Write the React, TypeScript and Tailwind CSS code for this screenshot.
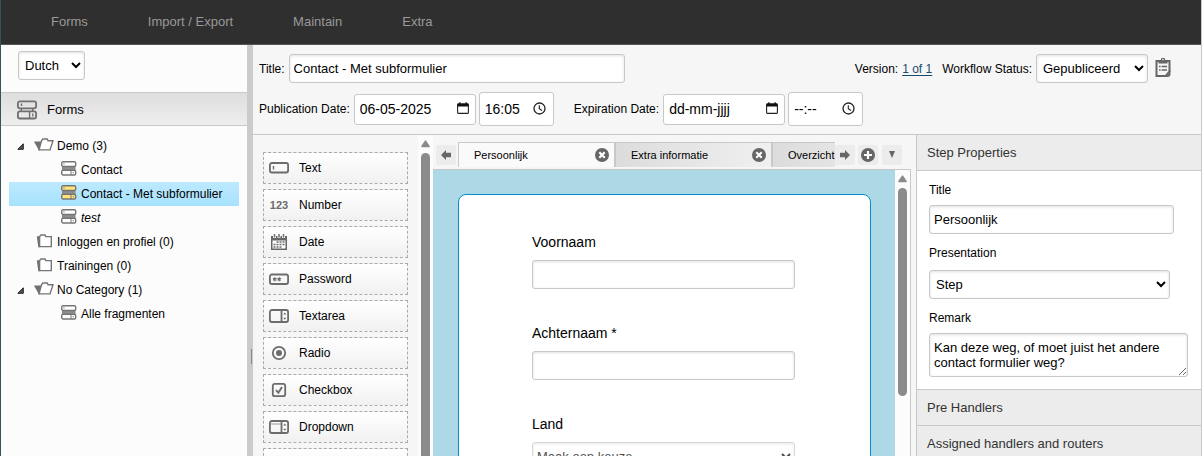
import type { ReactNode } from "react";

const fieldClass =
  "h-[29px] rounded-[3px] border border-[#c8c8c8] bg-white text-[13px] text-black shadow-[inset_0_1px_3px_rgba(0,0,0,0.12)]";

/* Icons */

const FormIcon = ({ active = false }: { active?: boolean }) => (
  <svg width="16" height="15" viewBox="0 0 16 15" fill={active ? "#ffe47a" : "#fff"} stroke="#757575">
    <rect x="1" y="4" width="13.5" height="7" fill="#8e8e8e" stroke="none" />
    <rect x="0.7" y="0.8" width="14" height="4.7" rx="1.5" strokeWidth="1.4" />
    <rect x="0.7" y="9.3" width="14" height="4.7" rx="1.5" strokeWidth="1.4" />
    <path d="M10 9v5" />
    <path d="M3 2.3v1.2M12.3 11v1.2" strokeWidth="1" />
  </svg>
);

const FormsIcon = () => (
  <svg width="20" height="20" viewBox="0 0 20 20" fill="none" stroke="#707070" strokeWidth="1.8">
    <rect x="0.9" y="1.3" width="18.2" height="7" rx="2" />
    <rect x="0.9" y="11.3" width="18.2" height="7.2" rx="2" />
    <path d="M4.3 8.5v2.5M15.7 8.5v2.5M12.6 11.3v7" strokeWidth="1.4" />
    <path d="M4.5 3.5v2.5M15.8 13.5v3" strokeWidth="1.4" />
  </svg>
);

const OpenFolderIcon = () => (
  <svg width="20" height="14" viewBox="0 0 20 14">
    <path d="M0 3.5h7l-1.5 9H5z" fill="#6f6f6f" />
    <path d="M5 11.9 7.5 2.8 8.8 1h4.4l.8 1.8h5l-3 9.1z" fill="#fff" stroke="#757575" strokeWidth="1.4" />
  </svg>
);

const FolderIcon = () => (
  <svg width="20" height="14" viewBox="0 0 20 14">
    <path d="M2.8 2.2H6v11H4.3z" fill="#6f6f6f" />
    <path d="M5.6 12.6V2.6L7 1h4l.8 1.6h5.5v10z" fill="#fff" stroke="#757575" strokeWidth="1.4" />
  </svg>
);

const ClipboardIcon = () => (
  <svg width="16" height="20" viewBox="0 0 16 20">
    <path d="M1.5 4h13v10.5L10.8 19H1.5z" fill="#f5f5f5" stroke="#666" strokeWidth="2" />
    <path d="M15.5 12.5V17a3 3 0 0 1-3 3H8.5c3.500 0 6-3 7-7.500z" fill="#666" />
    <path d="M3.500 3H5.700a2.300 2.300 0 1 1 4.600 0h2.200v3.500h-9z" fill="#666" />
    <circle cx="8" cy="2.600" r="0.800" fill="#f5f5f5" />
    <path d="M4 9.500h1.600M4 13h1.600M6.600 9.500H12M6.600 13H12" stroke="#666" strokeWidth="1.400" />
  </svg>
);

const CalendarIcon = () => (
  <svg className="pointer-events-none absolute right-[7px] top-[8px]" width="12" height="13" viewBox="0 0 12 13">
    <rect x="0.6" y="2" width="10.8" height="9.4" rx="0.8" fill="none" stroke="#222" strokeWidth="1.1" />
    <path d="M.6 1.6h10.8v2.9H.6zM2.2.3h1.3v1.6H2.2zM8.500.3h1.3v1.6H8.500z" fill="#111" />
  </svg>
);

const ClockIcon = () => (
  <svg
    className="pointer-events-none absolute right-[8px] top-[10px]"
    width="13"
    height="13"
    viewBox="0 0 13 13"
    fill="none"
    stroke="#222"
  >
    <circle cx="6.5" cy="6.5" r="5.5" strokeWidth="1.3" />
    <path d="M6.3 3.2v3.6l2.7 1.7" strokeWidth="1.1" />
  </svg>
);

const CloseIcon = () => (
  <svg width="14" height="14" viewBox="0 0 14 14">
    <circle cx="7" cy="7" r="7" fill="#666" />
    <path d="m4.3 4.3 5.4 5.4M9.7 4.3 4.3 9.7" stroke="#fff" strokeWidth="2.2" />
  </svg>
);

const PlusIcon = () => (
  <svg width="14" height="14" viewBox="0 0 14 14">
    <circle cx="7" cy="7" r="7" fill="#666" />
    <path d="M7 3v8M3 7h8" stroke="#fff" strokeWidth="2.2" />
  </svg>
);

const LeftIcon = () => (
  <svg width="10" height="10" viewBox="0 0 10 10">
    <path d="M0 5 5 0v2.7h5v4.6H5V10z" fill="#666" />
  </svg>
);

const RightIcon = () => (
  <svg width="10" height="10" viewBox="0 0 10 10">
    <path d="M10 5 5 0v2.7H0v4.6h5V10z" fill="#666" />
  </svg>
);

const ToolSvg = ({ children }: { children: ReactNode }) => (
  <svg width="20" height="16" viewBox="0 0 20 16" fill="none" stroke="#6c6c6c" strokeWidth="1.8">
    {children}
  </svg>
);

const fieldTools: { label: string; icon: ReactNode }[] = [
  {
    label: "Text",
    icon: (
      <ToolSvg>
        <rect x="0.9" y="3" width="18.2" height="9.5" rx="2" />
        <path d="M4.5 6v3.5" strokeWidth="1.4" />
      </ToolSvg>
    ),
  },
  {
    label: "Number",
    icon: <span className="w-5 text-center text-[11px] font-bold text-[#6c6c6c]">123</span>,
  },
  {
    label: "Date",
    icon: (
      <ToolSvg>
        <path d="M2 2h16v14H2z" fill="#666" stroke="none" />
        <path d="M3.5 6.5h13v8h-13z" fill="#fff" stroke="none" />
        <path d="M5.5 0v4M10 0v4M14.5 0v4" stroke="#fff" strokeWidth="3" />
        <path d="M5.5 0v3.5M10 0v3.5M14.5 0v3.5" strokeWidth="1.5" />
        <path d="M7.5 8h8M4.5 10.5h11M4.5 13h8" strokeDasharray="2 1" strokeWidth="1.6" />
      </ToolSvg>
    ),
  },
  {
    label: "Password",
    icon: (
      <ToolSvg>
        <rect x="0.9" y="3.5" width="18.2" height="9.5" rx="2" />
        <path d="M5.8 6.2v4M4 7.2l3.6 2M7.6 7.2l-3.6 2M10.3 6.2v4M8.5 7.2l3.6 2M12.1 7.2l-3.6 2" strokeWidth="1.2" />
      </ToolSvg>
    ),
  },
  {
    label: "Textarea",
    icon: (
      <ToolSvg>
        <rect x="0.9" y="2" width="18.2" height="12" rx="2" />
        <path d="M12.5 2v12" />
        <path d="m14.2 6.5 1.6-2 1.6 2zM14.2 9.7l1.6 2 1.6-2z" fill="#6c6c6c" stroke="none" />
      </ToolSvg>
    ),
  },
  {
    label: "Radio",
    icon: (
      <ToolSvg>
        <circle cx="10" cy="8" r="6.2" />
        <circle cx="10" cy="8" r="3" fill="#6c6c6c" stroke="none" />
      </ToolSvg>
    ),
  },
  {
    label: "Checkbox",
    icon: (
      <ToolSvg>
        <rect x="3.8" y="1.8" width="12.4" height="12.4" rx="2" />
        <path d="m7 8.2 2.4 2.6L13 5" strokeWidth="1.9" />
      </ToolSvg>
    ),
  },
  {
    label: "Dropdown",
    icon: (
      <ToolSvg>
        <rect x="0.9" y="2" width="18.2" height="12" rx="2" />
        <path d="M12.5 2v12" />
        <path d="M1 5h11" strokeWidth="1" stroke="#999" />
        <path d="m14.2 6.5 1.6-2 1.6 2zM14.2 9.7l1.6 2 1.6-2z" fill="#6c6c6c" stroke="none" />
      </ToolSvg>
    ),
  },
  { label: "", icon: null },
];

const tree = [
  { label: "Demo (3)", type: "open" },
  { label: "Contact", type: "form" },
  { label: "Contact - Met subformulier", type: "form", active: true },
  { label: "test", type: "form", italic: true },
  { label: "Inloggen en profiel (0)", type: "closed" },
  { label: "Trainingen (0)", type: "closed" },
  { label: "No Category (1)", type: "open" },
  { label: "Alle fragmenten", type: "form" },
];

const TopBar = () => (
  <nav className="flex h-[45px] shrink-0 items-center border-b border-[#555] bg-[#2f2f2f] pl-5 text-[13px] text-[#999]">
    <a href="#forms" className="px-[30px]">Forms</a>
    <a href="#import" className="px-[30px]">Import / Export</a>
    <a href="#maintain" className="px-[30px]">Maintain</a>
    <a href="#extra" className="px-[30px]">Extra</a>
  </nav>
);

const Sidebar = () => (
  <aside className="w-[246px] shrink-0 bg-[#fcfcfc]">
    <div className="px-[17px] pb-3 pt-[6px]">
      <select aria-label="Language" className={`${fieldClass} block w-[67px] px-[2px]`}>
        <option>Dutch</option>
      </select>
    </div>
    <div className="flex h-[34px] items-center gap-[10px] border-y border-[#c8c8c8] bg-linear-to-b from-[#dedede] to-[#eee] px-4 pt-[2px] text-[13px]">
      <FormsIcon />
      Forms
    </div>
    <ul className="px-2 pt-2 text-xs">
      {tree.map((node) =>
        node.type === "form" ? (
          <li
            key={node.label}
            className={`flex h-6 items-center gap-1 pl-[52px] ${
              node.active ? "bg-linear-to-b from-[#bdeaff] to-[#a6e1fd]" : ""
            } ${node.italic ? "italic" : ""}`}
          >
            <span className="pb-1">
              <FormIcon active={node.active} />
            </span>
            {node.label}
          </li>
        ) : (
          <li key={node.label} className="flex h-6 items-center gap-[3px] pl-2">
            <span className="w-[14px]">
              {node.type === "open" && (
                <svg width="7" height="7" viewBox="0 0 7 7">
                  <path d="M6.3.8v5.5H.8z" fill="#555" stroke="#222" />
                </svg>
              )}
            </span>
            <span className="pb-[3px]">{node.type === "open" ? <OpenFolderIcon /> : <FolderIcon />}</span>
            {node.label}
          </li>
        ),
      )}
    </ul>
  </aside>
);

const DateTimeInputs = ({ id, date, time }: { id: string; date: string; time: string }) => (
  <div className="flex items-center gap-[3px]">
    <div className="relative">
      <input
        id={id}
        defaultValue={date}
        className="block h-[31px] w-[122px] rounded-[3px] border border-[#c8c8c8] bg-white px-[5px] text-sm text-black"
      />
      <CalendarIcon />
    </div>
    <div className="relative">
      <input
        aria-label="Time"
        defaultValue={time}
        className="block h-[34px] w-[75px] rounded-[3px] border border-[#c8c8c8] bg-white px-[5px] text-sm text-black"
      />
      <ClockIcon />
    </div>
  </div>
);

const FormHeader = () => (
  <header className="border-b border-[#c8c8c8] bg-[#f6f6f6] pb-2 pl-[6px] pr-[30px] pt-[9px] text-xs">
    <div className="flex items-center">
      <label htmlFor="title" className="mr-1">Title:</label>
      <input id="title" defaultValue="Contact - Met subformulier" className={`${fieldClass} w-[336px] px-1`} />
      <div className="ml-auto flex items-center">
        <span>Version:</span>
        <a href="#version" className="ml-1 mr-[10px] text-[#1a4a6e] underline underline-offset-2">1 of 1</a>
        <label htmlFor="status" className="mr-1">Workflow Status:</label>
        <select id="status" className={`${fieldClass} w-[112px] px-[2px]`}>
          <option>Gepubliceerd</option>
        </select>
        <button type="button" aria-label="Report" className="ml-[7px] pb-[3px]">
          <ClipboardIcon />
        </button>
      </div>
    </div>
    <div className="mt-[9px] flex items-center">
      <label htmlFor="publication" className="mr-1">Publication Date:</label>
      <DateTimeInputs id="publication" date="06-05-2025" time="16:05" />
      <label htmlFor="expiration" className="ml-5 mr-1">Expiration Date:</label>
      <DateTimeInputs id="expiration" date="dd-mm-jjjj" time="--:--" />
    </div>
  </header>
);

const ScrollBar = ({ thumb }: { thumb: string }) => (
  <div className="flex w-[15px] shrink-0 flex-col items-center gap-[5px] bg-[#fcfcfc] pt-[5px]">
    <svg className="shrink-0" width="9" height="8" viewBox="0 0 9 8">
      <path d="M4.5 1.2 8 6.5H1z" fill="#8b8b8b" stroke="#8b8b8b" strokeWidth="1.6" strokeLinejoin="round" />
    </svg>
    <div className={`w-[9px] shrink-0 rounded-full bg-[#8b8b8b] ${thumb}`} />
  </div>
);

const Toolbox = () => (
  <div className="flex w-[180px] shrink-0 overflow-hidden bg-[#f6f6f6]">
    <div className="flex flex-1 flex-col gap-[5px] px-[10px] pt-[17px]">
      {fieldTools.map((tool) => (
        <button
          key={tool.label}
          type="button"
          className="flex h-8 shrink-0 items-center gap-[10px] border border-dashed border-[#aaa] bg-linear-to-b from-white to-[#f1f1f1] px-[5px] text-xs"
        >
          {tool.icon}
          {tool.label}
        </button>
      ))}
    </div>
    <ScrollBar thumb="h-[500px]" />
  </div>
);

const Tab = ({ label, active = false }: { label: string; active?: boolean }) => (
  <div
    className={`flex shrink-0 items-center justify-between border-t border-[#c8c8c8] pl-[15px] pr-[5px] text-[11px] ${
      active ? "w-[156px] border-l bg-[#fafafa]" : "w-[157px] border-l-2 bg-linear-to-r from-[#dcdcdc] to-[#f0f0f0]"
    }`}
  >
    {label}
    <button type="button" aria-label={`Close ${label}`}>
      <CloseIcon />
    </button>
  </div>
);

const tabButton = "flex size-5 shrink-0 items-center justify-center rounded-xs bg-[#ececec]";

const Canvas = () => (
  <div className="flex min-w-0 flex-1 flex-col bg-[#f6f6f6] pr-[5px]">
    <div className="flex items-center pl-[3px] pr-[9px] pt-[7px]">
      <button type="button" aria-label="Previous" className={tabButton}>
        <LeftIcon />
      </button>
      <div className="ml-[2px] flex h-[25px] flex-1 overflow-hidden">
        <Tab label="Persoonlijk" active />
        <Tab label="Extra informatie" />
        <Tab label="Overzicht" />
      </div>
      <div className="flex gap-[3px]">
        <button type="button" aria-label="Next" className={tabButton}>
          <RightIcon />
        </button>
        <button type="button" aria-label="Add step" className={tabButton}>
          <PlusIcon />
        </button>
        <button type="button" aria-label="All steps" className={`${tabButton} ml-px`}>
          <svg width="6" height="7" viewBox="0 0 6 7">
            <path d="M0 0h6L3 7z" fill="#666" />
          </svg>
        </button>
      </div>
    </div>
    <div className="mt-[2px] flex min-h-0 flex-1 overflow-hidden border-r border-t border-[#c8c8c8]">
      <div className="flex-1 bg-[#add8e6] pl-[25px] pr-6 pt-6">
        <form className="flex h-[600px] flex-col gap-[34px] rounded-lg border border-[#0090d0] bg-white pl-[73px] pr-[75px] pt-[37px] text-sm">
          <div>
            <label htmlFor="voornaam" className="block pb-2">Voornaam</label>
            <input id="voornaam" className={`${fieldClass} block w-full px-1`} />
          </div>
          <div>
            <label htmlFor="achternaam" className="block pb-2">Achternaam *</label>
            <input id="achternaam" className={`${fieldClass} block w-full px-1`} />
          </div>
          <div>
            <label htmlFor="land" className="block pb-2">Land</label>
            <select id="land" disabled className={`${fieldClass} block w-full opacity-70`}>
              <option>Maak een keuze</option>
            </select>
          </div>
        </form>
      </div>
      <ScrollBar thumb="h-[208px]" />
    </div>
  </div>
);

const PanelTitle = ({ children }: { children: ReactNode }) => (
  <h2 className="flex h-9 items-center border-b border-[#c8c8c8] bg-[#ececec] px-[10px] text-[13px] text-[#333]">
    {children}
  </h2>
);

const Properties = () => (
  <section className="w-[285px] shrink-0 border-l border-[#c8c8c8] bg-white">
    <PanelTitle>Step Properties</PanelTitle>
    <div className="border-b border-[#c8c8c8] px-3 pb-3 pt-[11px] text-xs">
      <label htmlFor="stepTitle" className="block pb-[7px]">Title</label>
      <input id="stepTitle" defaultValue="Persoonlijk" className={`${fieldClass} block w-[245px] px-1`} />
      <label htmlFor="presentation" className="block pb-[9px] pt-[11px]">Presentation</label>
      <select id="presentation" className={`${fieldClass} block w-[241px] px-[2px]`}>
        <option>Step</option>
      </select>
      <label htmlFor="remark" className="block pb-[7px] pt-[11px]">Remark</label>
      <textarea
        id="remark"
        defaultValue="Kan deze weg, of moet juist het andere contact formulier weg?"
        className="block h-11 w-[259px] rounded-[3px] border border-[#c8c8c8] px-1 pt-[6px] text-[13px] leading-[15px] text-black shadow-[inset_0_1px_3px_rgba(0,0,0,0.12)]"
      />
    </div>
    <PanelTitle>Pre Handlers</PanelTitle>
    <PanelTitle>Assigned handlers and routers</PanelTitle>
  </section>
);

const App = () => {
  return (
    <div className="flex h-screen flex-col overflow-hidden border-x border-l-[#36525a] border-r-[#c8c8c8] font-['Liberation_Sans',Arial,sans-serif] text-black">
      <TopBar />
      <div className="flex min-h-0 flex-1">
        <Sidebar />
        {/* Splitter */}
        <div className="flex w-[6px] shrink-0 items-center bg-[#cbcbcb] pt-[212px]">
          <div className="ml-1 h-[15px] w-px bg-[#888]" />
        </div>
        <main className="flex min-w-0 flex-1 flex-col">
          <FormHeader />
          <div className="flex min-h-0 flex-1">
            <Toolbox />
            <Canvas />
            <Properties />
          </div>
        </main>
      </div>
    </div>
  );
};

export default App;
